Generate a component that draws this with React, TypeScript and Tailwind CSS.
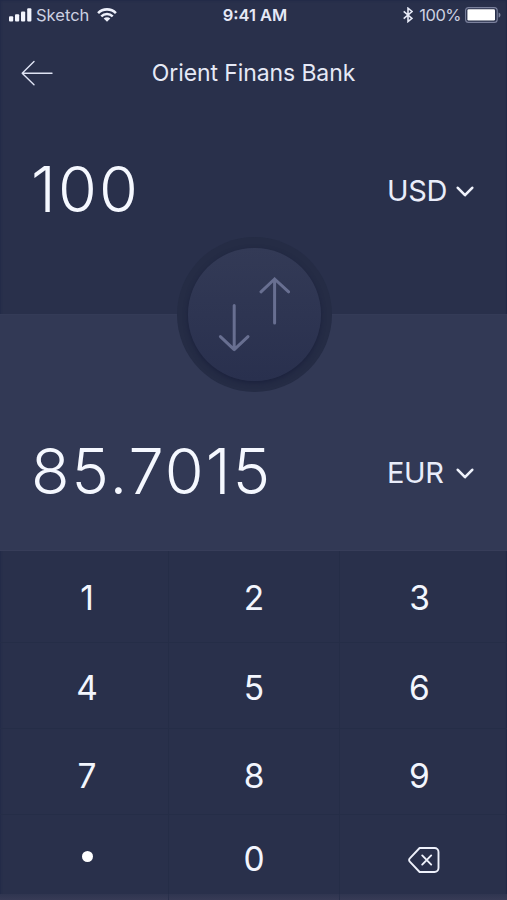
import { useState } from 'react';
import type { ReactNode } from 'react';

const SignalIcon = () => (
  <svg width="23" height="14" viewBox="0 0 23 14" fill="#f3f5fd">
    <rect x="0" y="8.2" width="4.2" height="5.3" rx="1" />
    <rect x="6" y="6.2" width="4.2" height="7.3" rx="1" />
    <rect x="12" y="3.5" width="4.2" height="10" rx="1" />
    <rect x="18.2" y="0.3" width="4.2" height="13.2" rx="1" />
  </svg>
);

const WifiIcon = () => (
  <svg width="20" height="14" viewBox="0 0 20 14" fill="none" stroke="#eef1fb">
    <path d="M1.1 5.1a12.6 12.6 0 0 1 17.8 0" strokeWidth="2.6" />
    <path d="M4.3 8.4a8.1 8.1 0 0 1 11.4 0" strokeWidth="2.5" />
    <path d="M10 13.8 6.7 10.5a4.7 4.7 0 0 1 6.6 0z" fill="#eef1fb" stroke="none" />
  </svg>
);

const BluetoothIcon = () => (
  <svg width="10" height="16" viewBox="0 0 10 16" fill="none" stroke="#e6e9f6" strokeWidth="1.6">
    <path d="M0.7 4.4 9 11.4 5 14.6V1.2L9 4.5 0.7 11.6" />
  </svg>
);

const BatteryIcon = () => (
  <svg width="36" height="16" viewBox="0 0 36 16">
    <rect x="0.6" y="0.6" width="31.6" height="14.8" rx="3" fill="none" stroke="#7b819d" strokeWidth="1.1" />
    <rect x="2.4" y="2.3" width="27.6" height="11.2" rx="1.2" fill="#fff" />
    <path d="M33.6 5.4c1.2.4 1.9 1.4 1.9 2.6s-.7 2.2-1.9 2.6z" fill="#7b819d" />
  </svg>
);

const BackIcon = () => (
  <svg width="32" height="26" viewBox="0 0 32 26" fill="none" stroke="#dfe3f4" strokeWidth="1.4" strokeLinecap="round" strokeLinejoin="round">
    <path d="M31 13.2H1.2M13 1.6 1.2 13.2 13 24.8" />
  </svg>
);

const ChevronIcon = () => (
  <svg className="mt-[3px]" width="18" height="12" viewBox="0 0 18 12" fill="none" stroke="#f0f3fc" strokeWidth="2.6" strokeLinecap="round" strokeLinejoin="round">
    <path d="M1.8 1.8 9 9.2 16.2 1.8" />
  </svg>
);

const SwapIcon = () => (
  <svg className="mr-[1px]" width="72" height="76" viewBox="0 0 72 76" fill="none" stroke="#686f91" strokeWidth="3" strokeLinecap="round" strokeLinejoin="round">
    <path d="M16.2 28.6V72.6M2.4 59.6 16.2 72.6 30 59.6" />
    <path d="M56.6 46V2M43 14.8 56.6 2 70.6 14.8" />
  </svg>
);

const BackspaceIcon = () => (
  <svg className="ml-[9px]" width="32" height="26" viewBox="0 0 32 26" fill="none" stroke="#eef1fb" strokeWidth="1.9" strokeLinecap="round" strokeLinejoin="round">
    <path d="M11.6 1h14.9a4 4 0 0 1 4 4v16a4 4 0 0 1-4 4H11.6L1.8 14.6a2.2 2.2 0 0 1 0-3.2z" />
    <path d="M14.2 8.4 23.2 17.6M23.2 8.4 14.2 17.6" />
  </svg>
);

interface AmountRowProps {
  amount: string;
  currency: string;
}

function AmountRow({ amount, currency }: AmountRowProps) {
  return (
    <div className="flex h-20 items-center justify-between pl-[31px] pr-[33px]">
      <span className="text-[63px] leading-none font-light tracking-[2.1px] text-[#f5f8ff]">
        {amount}
      </span>
      <button className="mt-[3px] flex w-[87px] items-center justify-between text-[29px] leading-none tracking-[-0.4px] text-[#e9edfa]">
        {currency}
        <ChevronIcon />
      </button>
    </div>
  );
}

interface KeyProps {
  children: ReactNode;
  onClick: () => void;
}

function Key({ children, onClick }: KeyProps) {
  return (
    <button
      onClick={onClick}
      className="flex items-center justify-center border-b border-[#252d47] pt-[4px] text-[33.5px] leading-none text-[#f3f6fe] nth-[3n+1]:border-r nth-[3n+1]:pl-[6px] nth-[3n+2]:border-r nth-[n+4]:pt-[7px] nth-[3n]:pr-[8px] nth-[n+7]:pt-[10px] nth-[n+10]:border-b-0 nth-[n+10]:pt-[9px]"
    >
      {children}
    </button>
  );
}

const KEYS = ['1', '2', '3', '4', '5', '6', '7', '8', '9', '.', '0', 'del'];
const RATE = 0.857015;

function App() {
  const [amount, setAmount] = useState('100');

  const handleKey = (key: string) => {
    if (key === 'del') {
      setAmount(amount.slice(0, -1) || '0');
    } else if (key !== '.' || !amount.includes('.')) {
      setAmount(amount === '0' && key !== '.' ? key : amount + key);
    }
  };

  const converted = String(Number((Number(amount) * RATE).toFixed(4)));

  return (
    <div className="flex h-[900px] w-[507px] flex-col overflow-hidden bg-[#29304b] font-['Inter',sans-serif] text-[#e6e9f6] shadow-[inset_1px_1px_2px_#222a48,inset_-1px_0_1px_#222a48]">
      {/* Status bar */}
      <div className="grid h-[30px] grid-cols-3 items-center pl-[9px] pr-[6px] text-[16.5px] leading-none">
        <div className="flex items-center">
          <SignalIcon />
          <span className="ml-[4px] mr-[8px] text-[#cdd1e2]">Sketch</span>
          <WifiIcon />
        </div>
        <span className="text-center font-semibold">9:41 AM</span>
        <div className="flex items-center justify-end">
          <BluetoothIcon />
          <span className="ml-[6px] mr-[4px] tracking-[-0.5px] text-[#cdd1e2]">100%</span>
          <BatteryIcon />
        </div>
      </div>

      {/* Header */}
      <header className="grid h-[86px] grid-cols-[100px_1fr_100px] items-center">
        <button className="pl-[21px]">
          <BackIcon />
        </button>
        <h1 className="text-center text-[23px] leading-none tracking-[-0.1px] whitespace-nowrap">Orient Finans Bank</h1>
      </header>

      {/* From */}
      <section className="h-[198px] pt-[33px]">
        <AmountRow amount={amount} currency="USD" />
      </section>

      {/* To */}
      <section className="relative h-[237px] border-t border-b border-t-[#343b57] border-b-[#373d59] bg-[#323955] pt-[116px]">
        <AmountRow amount={converted} currency="EUR" />
        <div className="absolute top-[-78px] left-[177px] flex size-[155px] items-center justify-center rounded-full bg-[#252c45]">
          <button className="flex size-[133px] items-center justify-center rounded-full bg-linear-to-b from-[#333a56] via-[#2e3552] to-[#29304e] shadow-[0_2px_5px_#1b213d]">
            <SwapIcon />
          </button>
        </div>
      </section>

      {/* Keypad */}
      <div className="grid h-[343px] grid-cols-[169px_171px_167px] grid-rows-[92px_86px_86px_79px]">
        {KEYS.map((key) => (
          <Key key={key} onClick={() => handleKey(key)}>
            {key === '.' && <span className="mb-[6px] size-[11px] rounded-full bg-white" />}
            {key === 'del' && <BackspaceIcon />}
            {key !== '.' && key !== 'del' && key}
          </Key>
        ))}
      </div>
      <div className="grid flex-1 grid-cols-[169px_171px_167px] bg-linear-to-b from-[#2f3550] to-[#383b56]">
        <div className="border-r border-[#29304b]" />
        <div className="border-r border-[#29304b]" />
      </div>
    </div>
  );
}

export default App;
